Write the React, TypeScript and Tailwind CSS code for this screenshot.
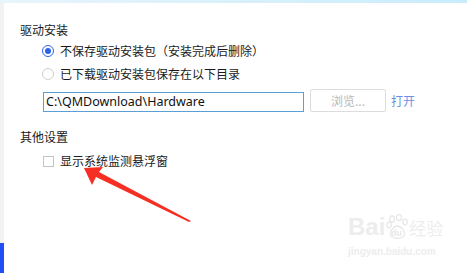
import React from 'react';

const cjk = { fontFamily: '"Microsoft YaHei", "Noto Sans CJK SC", "Noto Sans", sans-serif' };

function Radio({ checked }: { checked?: boolean }) {
  return (
    <span
      className={
        'flex h-[12px] w-[12px] items-center justify-center rounded-full border bg-white ' +
        (checked ? 'border-[#2a62e8]' : 'border-[#cfcfcf]')
      }
    >
      {checked && <span className="h-[6px] w-[6px] rounded-full bg-[#2a62e8]" />}
    </span>
  );
}

export default function App() {
  return (
    <div className="relative flex h-[273px] w-[467px] flex-col overflow-hidden bg-white text-[12px] text-[#1a1a1a]" style={cjk}>
      <div className="h-[3px] w-full bg-gradient-to-r from-[#e9f5fb] to-[#c9ecfc]" />
      <div className="flex flex-1">
        {/* left rail */}
        <div className="flex w-[4px] flex-col">
          <div className="flex-1 bg-[#f2f2f2]" />
          <div className="h-[30px] bg-[#1f4ff5]" />
        </div>

        <div className="flex flex-1 flex-col pl-[16px] pt-[19px]">
          <div className="h-[16px] leading-[16px]">驱动安装</div>

          <div className="ml-[22px] mt-[3px] flex h-[20px] items-center gap-[6px]">
            <Radio checked />
            <span className="leading-[16px]">不保存驱动安装包（安装完成后删除）</span>
          </div>
          <div className="ml-[22px] mt-[3px] flex h-[20px] items-center gap-[6px]">
            <Radio />
            <span className="leading-[16px]">已下载驱动安装包保存在以下目录</span>
          </div>

          <div className="ml-[23px] mt-[5px] flex items-start">
            <div
              className="mt-[3px] flex h-[20px] w-[261px] items-center border border-[#5b9fd6] pl-[2px] text-[12.5px] leading-[18px] text-[#111]"
              style={{ fontFamily: '"Segoe UI", "Noto Sans", sans-serif' }}
            >
              C:\QMDownload\Hardware
            </div>
            <button className="ml-[6px] flex h-[23px] w-[76px] items-center justify-center rounded-[2px] border border-[#dcdcdc] bg-white text-[#b8b8b8]">
              浏览...
            </button>
            <span className="ml-[5px] mt-[4px] leading-[16px] text-[#6f8fe6]">打开</span>
          </div>

          <div className="mt-[17px] h-[16px] leading-[16px]">其他设置</div>

          <div className="ml-[23px] mt-[6px] flex h-[20px] items-center gap-[6px]">
            <span className="h-[11px] w-[11px] border border-[#c4c4c4] bg-white" />
            <span className="leading-[16px]">显示系统监测悬浮窗</span>
          </div>
        </div>
      </div>

      {/* red annotation arrow */}
      <svg className="absolute left-0 top-0" width="467" height="273" viewBox="0 0 467 273">
        <polygon
          points="84,168 103,167 99,172 191,221 189,222 96,177 92,185"
          fill="#f52f24"
        />
      </svg>

      {/* watermark */}
      <div className="absolute left-[348px] top-[214px] flex flex-col items-start text-[#ededed]">
        <div className="flex items-end">
          <span className="text-[24px] font-bold leading-[26px]" style={{ fontFamily: '"Liberation Sans", Arial, sans-serif' }}>Bai</span>
          <svg width="22" height="26" viewBox="0 0 22 26" className="mx-[1px]">
            <g fill="none" stroke="#e8e8e8" strokeWidth="1.3">
              <ellipse cx="6" cy="5" rx="2.5" ry="3" />
              <ellipse cx="13" cy="3.5" rx="2.5" ry="3" />
              <ellipse cx="19" cy="8" rx="2.2" ry="2.8" />
              <ellipse cx="3" cy="11" rx="2.2" ry="2.8" />
              <path d="M5 22 C3 17 8 12 11 12 C15 12 20 17 18 22 C16 25 7 25 5 22 Z" />
            </g>
            <text x="5" y="22" fontSize="9" fill="#e8e8e8" fontWeight="bold" fontFamily="Liberation Sans, sans-serif">du</text>
          </svg>
          <span className="text-[17px] leading-[24px]" style={cjk}>经验</span>
        </div>
        <span className="mt-[6px] text-[10px] font-bold leading-[12px]" style={{ fontFamily: '"Liberation Sans", Arial, sans-serif' }}>
          jingyan.baidu.com
        </span>
      </div>
    </div>
  );
}
